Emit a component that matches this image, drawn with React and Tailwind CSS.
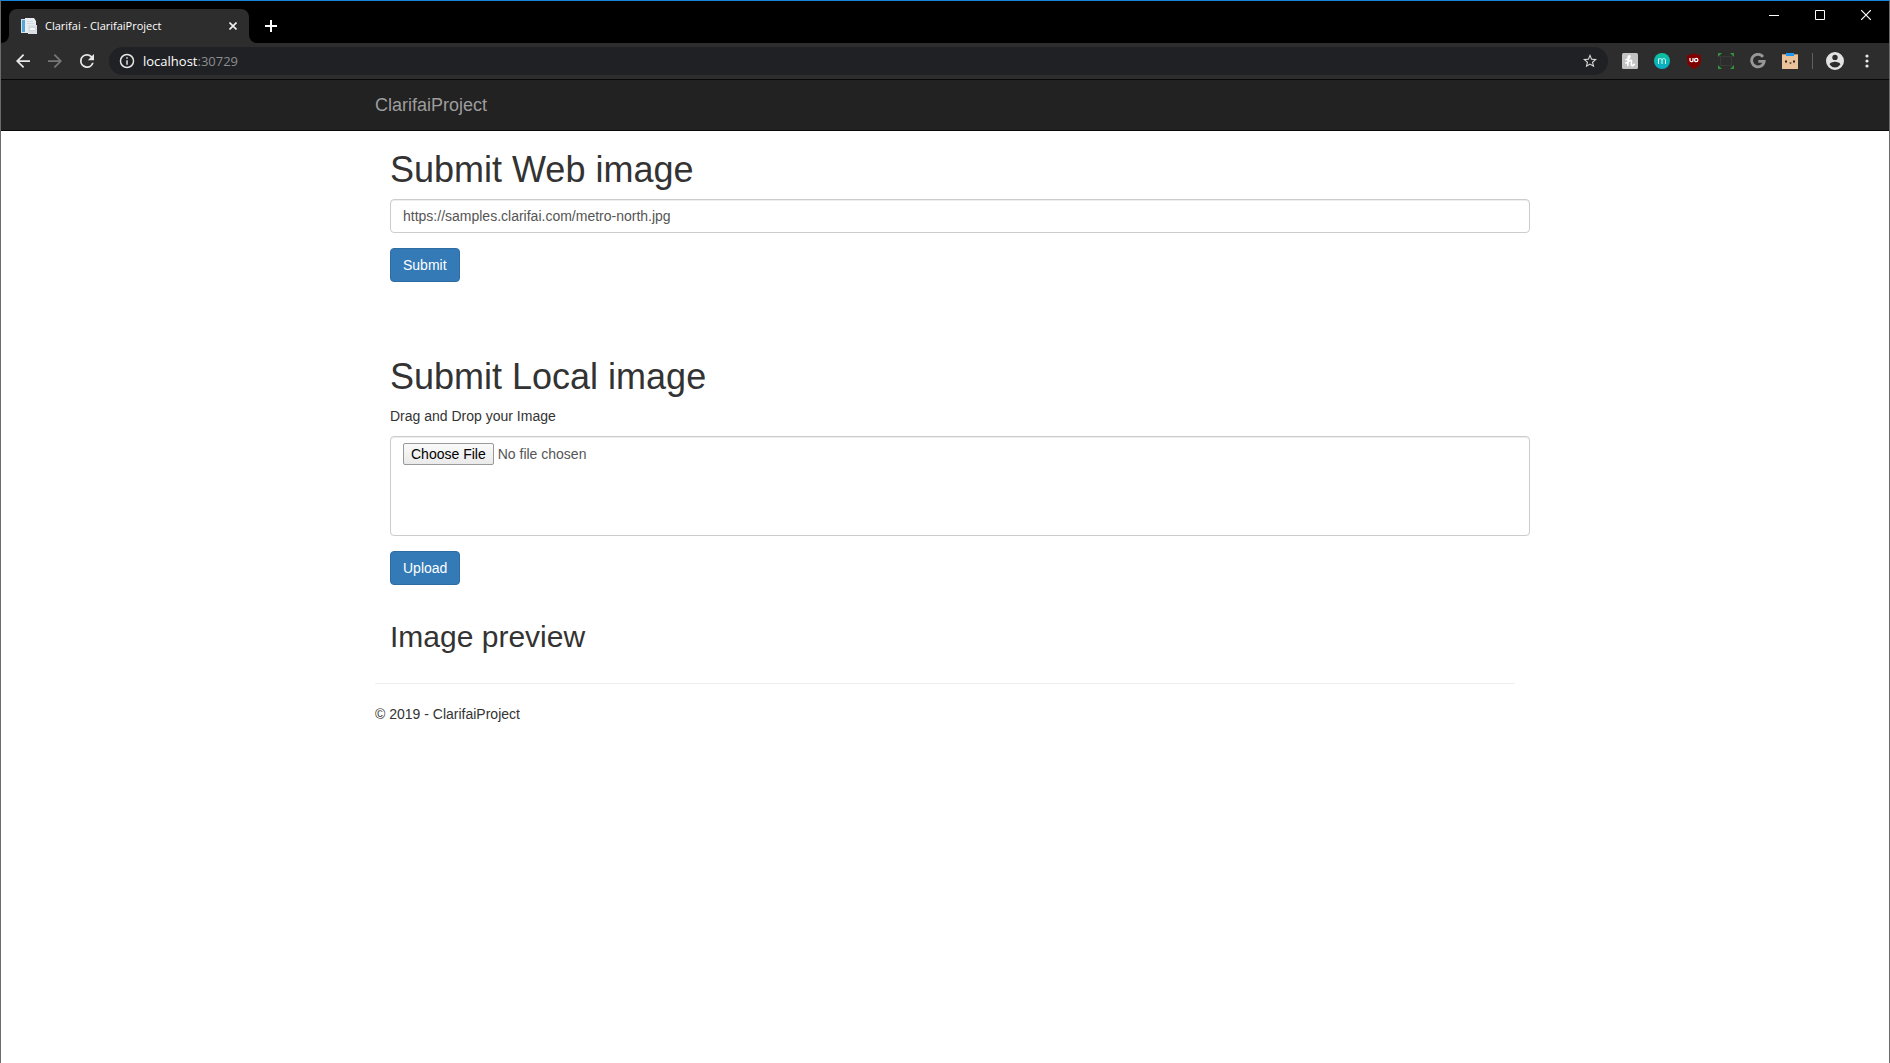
import React from "react";

const iconButton = "flex h-8 w-8 shrink-0 items-center justify-center";
const windowButton = "flex h-7 w-[46px] items-center justify-center";
const primaryButton =
  "block rounded border border-[#2e6da4] bg-[#337ab7] px-3 py-[6px] text-sm leading-5 text-white hover:bg-[#286090]";
const formControl =
  "block w-full rounded border border-[#cccccc] bg-white px-3 text-sm leading-5 text-[#555555] shadow-[inset_0_1px_1px_rgba(0,0,0,0.075)]";

function Favicon() {
  return (
    <svg className="h-4 w-4 shrink-0" viewBox="0 0 16 16" aria-hidden="true">
      <path d="M0 1h4v14H0z" fill="#c9e3f3" />
      <path d="M1 2h3v12H1z" fill="#5aa5d3" />
      <path d="M4 0h9l2 3v12H4z" fill="#e9edf2" />
      <path d="M6 3.500h6M6 5.500h7" stroke="#d3d8e2" strokeWidth="1" />
      <path d="M7 7h9v9H7z" fill="#dadfe6" />
      <path d="M8.500 9.500h6v3h-6z" fill="#f7f9fb" stroke="#c5ccd6" strokeWidth=".7" />
    </svg>
  );
}

function TabStrip() {
  return (
    <div className="flex h-[42px] items-end justify-between bg-black">
      <div className="flex items-end">
        <svg className="h-2 w-2" viewBox="0 0 8 8" aria-hidden="true">
          <path d="M8 0v8H0a8 8 0 0 0 8-8z" fill="#2d2d2d" />
        </svg>
        <div className="flex h-[34px] w-60 items-center rounded-t-lg bg-[#2d2d2d] pl-3 pr-2">
          <Favicon />
          <span className="ml-2 grow whitespace-nowrap font-['Open_Sans',sans-serif] text-[11px] leading-4 text-white">
            Clarifai - ClarifaiProject
          </span>
          <button type="button" aria-label="Close tab" className="flex h-4 w-4 items-center justify-center">
            <svg className="h-2 w-2" viewBox="0 0 8 8" aria-hidden="true">
              <path d="m.5.5 7 7m0-7-7 7" stroke="#f1f1f1" strokeWidth="1.600" />
            </svg>
          </button>
        </div>
        <svg className="h-2 w-2" viewBox="0 0 8 8" aria-hidden="true">
          <path d="M0 0v8h8a8 8 0 0 1-8-8z" fill="#2d2d2d" />
        </svg>
        <button type="button" aria-label="New tab" className="flex h-[34px] w-7 items-center justify-center">
          <svg className="h-3 w-3" viewBox="0 0 12 12" aria-hidden="true">
            <path d="M6 0v12M0 6h12" stroke="#fff" strokeWidth="2" />
          </svg>
        </button>
      </div>
      <div className="flex self-start">
        <button type="button" aria-label="Minimize" className={windowButton}>
          <svg className="h-[10px] w-[10px]" viewBox="0 0 10 10" aria-hidden="true">
            <path d="M0 5.500h10" stroke="#fff" />
          </svg>
        </button>
        <button type="button" aria-label="Maximize" className={windowButton}>
          <svg className="h-[10px] w-[10px]" viewBox="0 0 10 10" aria-hidden="true">
            <path d="M.5.5h9v9h-9z" fill="none" stroke="#fff" />
          </svg>
        </button>
        <button type="button" aria-label="Close window" className={windowButton}>
          <svg className="h-[10px] w-[10px]" viewBox="0 0 10 10" aria-hidden="true">
            <path d="m0 0 10 10M10 0 0 10" stroke="#fff" strokeWidth="1.200" />
          </svg>
        </button>
      </div>
    </div>
  );
}

function Extensions() {
  return (
    <div className="flex items-center">
      <button type="button" aria-label="Honey" className={iconButton}>
        <svg className="h-4 w-4" viewBox="0 0 16 16" aria-hidden="true">
          <rect width="16" height="16" rx="1.500" fill="#c3c3c3" />
          <path
            d="M4 6.500C6.500 6.500 8.500 4.500 7.800 3.200 7.200 2.300 6.300 3.200 6.200 4.500L5.800 12.500M6 9.500c1-2.200 3.300-3 3.500-1.300.1 1-.7 3.300.2 4.100.8.6 2-.1 2.600-1M3.800 10c1-.2 1.600-.5 2.200-1.200"
            fill="none"
            stroke="#fff"
            strokeWidth="1.700"
            strokeLinecap="round"
          />
        </svg>
      </button>
      <button type="button" aria-label="Momentum" className={iconButton}>
        <svg className="h-4 w-4" viewBox="0 0 16 16" aria-hidden="true">
          <defs>
            <linearGradient id="teal" x1="0" y1="0" x2="0" y2="1">
              <stop offset="0" stopColor="#0cc49c" />
              <stop offset="1" stopColor="#08acc9" />
            </linearGradient>
          </defs>
          <circle cx="8" cy="8" r="8" fill="url(#teal)" />
          <path
            d="M4.500 11V5.500M4.500 7.200C4.700 5 8 5 8 7.200V11M8 7.200C8.200 5 11.500 5 11.500 7.200V11"
            fill="none"
            stroke="#e4fbfa"
            strokeWidth="1"
          />
        </svg>
      </button>
      <button type="button" aria-label="uBlock Origin" className={iconButton}>
        <svg className="h-4 w-4" viewBox="0 0 16 16" aria-hidden="true">
          <path
            d="M8 0c2 1.500 4 2 7 2v5c0 4.500-2.500 7-7 9-4.500-2-7-4.500-7-9V2c3 0 5-.5 7-2z"
            fill="#800000"
            stroke="#5f1f1f"
            strokeWidth=".5"
          />
          <path d="M4 5v2.200a1.500 1.500 0 0 0 3 0V5v3.500" fill="none" stroke="#fff" strokeWidth="1.300" />
          <circle cx="10.200" cy="7" r="1.700" fill="none" stroke="#fff" strokeWidth="1.300" />
        </svg>
      </button>
      <button type="button" aria-label="Screen capture" className={iconButton}>
        <svg className="h-4 w-4" viewBox="0 0 16 16" aria-hidden="true">
          <path
            d="M0 0h4L0 4zM16 0h-4l4 4zM0 16h4l-4-4zM16 16h-4l4-4z"
            fill="#35913a"
          />
          <rect x="2.500" y="3.500" width="11" height="9" fill="none" stroke="#393939" />
        </svg>
      </button>
      <button type="button" aria-label="Google" className={iconButton}>
        <svg className="h-4 w-4" viewBox="0 0 16 16" aria-hidden="true">
          <path
            d="M13 3.800A6.300 6.300 0 1 0 14.200 8.300H8.300"
            fill="none"
            stroke="#979797"
            strokeWidth="2.800"
          />
        </svg>
      </button>
      <button type="button" aria-label="Box assistant" className={iconButton}>
        <svg className="h-4 w-4" viewBox="0 0 16 16" aria-hidden="true">
          <rect y="1" width="16" height="15" rx=".5" fill="#eac39b" />
          <path d="M0 1h16v1H0z" fill="#b88e68" />
          <path d="M4 0h8v3H4z" fill="#2196f3" />
          <path d="M3 7.500h2v2H3zM11 7.500h2v2h-2z" fill="#27211d" />
          <path d="M7 9.500h3l-1.500 1.800z" fill="#4c3c31" />
          <path d="M3 11h2M11 11h2" stroke="#e8b596" />
        </svg>
      </button>
    </div>
  );
}

function Toolbar() {
  return (
    <div className="flex h-9 items-center bg-[#2d2d2d] px-[6px]">
      <button type="button" aria-label="Back" className={iconButton}>
        <svg className="h-[14px] w-[14px]" viewBox="4 4 16 16" aria-hidden="true">
          <path d="M20 11H7.830l5.590-5.590L12 4l-8 8 8 8 1.410-1.410L7.830 13H20v-2z" fill="#e8e8e8" />
        </svg>
      </button>
      <button type="button" aria-label="Forward" className={iconButton}>
        <svg className="h-[14px] w-[14px]" viewBox="4 4 16 16" aria-hidden="true">
          <path d="m12 4-1.410 1.410L16.170 11H4v2h12.170l-5.580 5.590L12 20l8-8z" fill="#777777" />
        </svg>
      </button>
      <button type="button" aria-label="Reload" className={iconButton}>
        <svg className="h-[14px] w-[14px]" viewBox="4 4 16 16" aria-hidden="true">
          <path
            d="M17.650 6.350A7.960 7.960 0 0 0 12 4a8 8 0 1 0 7.730 10h-2.080A6 6 0 1 1 12 6c1.660 0 3.140.69 4.220 1.780L13 11h7V4l-2.350 2.350z"
            fill="#e8e8e8"
          />
        </svg>
      </button>
      <div className="ml-[6px] flex h-7 grow items-center rounded-full bg-[#202124] pl-[10px] pr-1">
        <svg className="h-4 w-4 shrink-0" viewBox="1 1 22 22" aria-hidden="true">
          <path
            d="M11 17h2v-6h-2v6zM12 2a10 10 0 1 0 0 20 10 10 0 0 0 0-20zm0 18a8 8 0 1 1 0-16 8 8 0 0 1 0 16zM11 9h2V7h-2v2z"
            fill="#e8e8e8"
          />
        </svg>
        <div className="ml-2 grow font-['Open_Sans',sans-serif] text-[13px] leading-5 text-[#8b8d90]">
          <span className="text-white">localhost</span>:30729
        </div>
        <button type="button" aria-label="Bookmark this page" className="flex h-7 w-7 items-center justify-center">
          <svg className="h-[14px] w-[14px]" viewBox="2 2 20 20" aria-hidden="true">
            <path
              d="m22 9.240-7.190-.62L12 2 9.190 8.630 2 9.240l5.460 4.730L5.820 21 12 17.270 18.180 21l-1.630-7.030L22 9.240zM12 15.400l-3.760 2.270 1-4.280-3.320-2.880 4.380-.38L12 6.100l1.710 4.040 4.380.38-3.320 2.880 1 4.280L12 15.400z"
              fill="#d8d8d8"
            />
          </svg>
        </button>
      </div>
      <div className="ml-[6px] flex items-center">
        <Extensions />
        <div className="ml-[6px] h-4 w-px bg-[#5f6062]" />
        <button type="button" aria-label="Profile" className={`${iconButton} ml-[6px]`}>
          <svg className="h-[18px] w-[18px]" viewBox="2 2 20 20" aria-hidden="true">
            <path
              d="M12 2a10 10 0 1 0 0 20 10 10 0 0 0 0-20zm0 3a3 3 0 1 1 0 6 3 3 0 0 1 0-6zm0 14.200a7.200 7.200 0 0 1-6-3.220c.03-1.990 4-3.080 6-3.080s5.970 1.090 6 3.080a7.200 7.200 0 0 1-6 3.220z"
              fill="#e2e2e2"
            />
          </svg>
        </button>
        <button type="button" aria-label="Menu" className={iconButton}>
          <svg className="h-[14px] w-1" viewBox="0 0 4 14" aria-hidden="true">
            <g fill="#e8e8e8">
              <circle cx="2" cy="2" r="1.600" />
              <circle cx="2" cy="7" r="1.600" />
              <circle cx="2" cy="12" r="1.600" />
            </g>
          </svg>
        </button>
      </div>
    </div>
  );
}

function WebImageForm() {
  return (
    <form onSubmit={(event) => event.preventDefault()}>
      <h1 id="web-heading" className="mb-[9px] text-4xl leading-10 font-medium">
        Submit Web image
      </h1>
      <input
        type="text"
        aria-labelledby="web-heading"
        defaultValue="https://samples.clarifai.com/metro-north.jpg"
        className={`${formControl} h-[34px]`}
      />
      <button type="submit" className={`${primaryButton} mt-[15px]`}>
        Submit
      </button>
    </form>
  );
}

function LocalImageForm() {
  return (
    <form className="mt-[75px]" onSubmit={(event) => event.preventDefault()}>
      <h1 className="mb-[9px] text-4xl leading-10 font-medium">Submit Local image</h1>
      <label htmlFor="local-image" className="mb-[10px] block text-sm leading-5">
        Drag and Drop your Image
      </label>
      <input
        id="local-image"
        type="file"
        className={`${formControl} h-[100px] py-[6px] file:mr-1 file:h-[22px] file:rounded-[2px] file:border file:border-solid file:border-[#999999] file:bg-linear-to-b file:from-[#fafafa] file:to-[#eaeaea] file:px-[7px] file:text-sm file:leading-5 file:text-black`}
      />
      <button type="submit" className={`${primaryButton} mt-[15px]`}>
        Upload
      </button>
    </form>
  );
}

export default function App() {
  return (
    <div className="min-h-screen border-x border-t border-x-[#6b6b6b] border-t-[#1883d7] bg-white font-['Liberation_Sans',Arial,sans-serif] text-sm text-[#333333]">
      <TabStrip />
      <Toolbar />
      <nav className="border-y border-[#080808] bg-[#222222]">
        <div className="mx-auto max-w-[1170px] px-[15px] py-[15px]">
          <a href="#" className="block w-fit text-lg leading-5 text-[#9d9d9d] hover:text-white">
            ClarifaiProject
          </a>
        </div>
      </nav>
      <div className="mx-auto max-w-[1170px] px-[15px]">
        <main className="ml-[15px] -mr-[15px] pt-[19px]">
          <WebImageForm />
          <LocalImageForm />
          <h2 className="mt-9 text-3xl leading-8 font-medium">Image preview</h2>
        </main>
        <hr className="mt-[30px] mb-5 border-[#eeeeee]" />
        <footer>
          <p className="leading-5">© 2019 - ClarifaiProject</p>
        </footer>
      </div>
    </div>
  );
}
